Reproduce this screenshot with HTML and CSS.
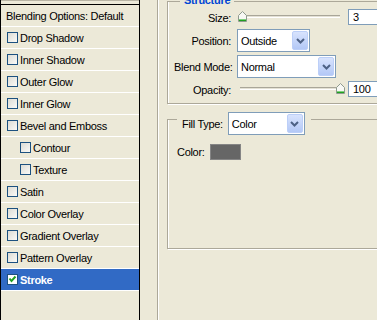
FILE: index.html
```html
<!DOCTYPE html>
<html lang="en">
<head>
    <meta charset="UTF-8">
    <meta name="viewport" content="width=device-width, initial-scale=1.0">
    <title>Layer Style - Stroke</title>
    <link rel="stylesheet" href="styles.css">
</head>
<body>
    <div class="dialog">
        <ul class="style-list">
            <li class="list-top"></li>
            <li class="item plain">Blending Options: Default</li>
            <li class="item"><span class="check"></span>Drop Shadow</li>
            <li class="item"><span class="check"></span>Inner Shadow</li>
            <li class="item"><span class="check"></span>Outer Glow</li>
            <li class="item"><span class="check"></span>Inner Glow</li>
            <li class="item"><span class="check"></span>Bevel and Emboss</li>
            <li class="item sub"><span class="check"></span>Contour</li>
            <li class="item sub"><span class="check"></span>Texture</li>
            <li class="item"><span class="check"></span>Satin</li>
            <li class="item"><span class="check"></span>Color Overlay</li>
            <li class="item"><span class="check"></span>Gradient Overlay</li>
            <li class="item"><span class="check"></span>Pattern Overlay</li>
            <li class="item selected">
                <span class="check checked">
                    <svg width="9" height="9" viewBox="0 0 9 9"><path d="M1.5 3.5 3.5 6 7.5 1.5" fill="none" stroke="#21A121" stroke-width="2"/></svg>
                </span>Stroke
            </li>
        </ul>

        <section class="stroke-group">
            <fieldset class="group structure">
                <legend>Structure</legend>
                <div class="form-grid">
                    <label>Size:</label>
                    <div class="slider-row">
                        <div class="slider">
                            <div class="track"></div>
                            <svg class="thumb" style="left: 1px" width="9" height="11" viewBox="0 0 9 11"><path d="M.5 4.5 4.5.5 8.5 4.5V10.5H.5Z" fill="#F8F8F4" stroke="#8E9A8E"/><path d="M1 8.5H8" stroke="#7FD07F"/><path d="M1 9.5H8" stroke="#21A121"/></svg>
                        </div>
                        <div class="field">3</div>
                    </div>

                    <label>Position:</label>
                    <div class="combo combo-position">
                        <span class="combo-text">Outside</span>
                        <span class="drop"><svg width="9" height="6" viewBox="0 0 9 6"><path d="M1 1 4.5 4.5 8 1" fill="none" stroke="#4D6185" stroke-width="2"/></svg></span>
                    </div>

                    <label>Blend Mode:</label>
                    <div class="combo combo-blend">
                        <span class="combo-text">Normal</span>
                        <span class="drop"><svg width="9" height="6" viewBox="0 0 9 6"><path d="M1 1 4.5 4.5 8 1" fill="none" stroke="#4D6185" stroke-width="2"/></svg></span>
                    </div>

                    <label>Opacity:</label>
                    <div class="slider-row">
                        <div class="slider">
                            <div class="track"></div>
                            <svg class="thumb" style="left: 99px" width="9" height="11" viewBox="0 0 9 11"><path d="M.5 4.5 4.5.5 8.5 4.5V10.5H.5Z" fill="#F8F8F4" stroke="#8E9A8E"/><path d="M1 8.5H8" stroke="#7FD07F"/><path d="M1 9.5H8" stroke="#21A121"/></svg>
                        </div>
                        <div class="field">100</div>
                    </div>
                </div>
            </fieldset>

            <fieldset class="group fill">
                <legend>
                    <span>Fill Type:</span>
                    <span class="combo combo-fill">
                        <span class="combo-text">Color</span>
                        <span class="drop"><svg width="9" height="6" viewBox="0 0 9 6"><path d="M1 1 4.5 4.5 8 1" fill="none" stroke="#4D6185" stroke-width="2"/></svg></span>
                    </span>
                </legend>
                <div class="color-row">
                    <span>Color:</span>
                    <span class="swatch"></span>
                </div>
            </fieldset>
        </section>
    </div>
</body>
</html>
```

FILE: styles.css
```css
/* Windows XP dialog colours */
:root {
    --face: #ECE9D8;
    --etch: #ACA899;
    --field-border: #7F9DB9;
    --highlight: #316AC5;
    --group-title: #0046D5;
}

* {
    box-sizing: border-box;
}

html, body {
    margin: 0;
    height: 320px;
    overflow: hidden;
}

body {
    background-color: var(--face);
    color: #000;
    font-family: "Liberation Sans", Arial, sans-serif;
    font-size: 11px;
    letter-spacing: -0.3px;
}

.dialog {
    display: flex;
    align-items: flex-start;
    height: 320px;
}

/* Left list of styles */
.style-list {
    flex: none;
    width: 140px;
    height: 320px;
    margin: 0;
    padding: 0;
    list-style: none;
    border-left: 1px solid #000;
    border-right: 1px solid #000;
}

.list-top {
    height: 5px;
    border-top: 1px solid #B8B4A4;
    border-bottom: 1px solid #000;
}

.item {
    display: flex;
    align-items: center;
    gap: 2px;
    height: 22px;
    padding-left: 6px;
    border-bottom: 1px solid #fff;
    white-space: nowrap;
}

.item.plain {
    padding-left: 5px;
}

.item.sub {
    padding-left: 19px;
}

.item.selected {
    background-color: var(--highlight);
    color: #fff;
    font-weight: bold;
}

.check {
    flex: none;
    display: flex;
    align-items: center;
    justify-content: center;
    width: 11px;
    height: 11px;
    border: 1px solid #1C5180;
    background: linear-gradient(135deg, #DCDBD4, #FAFAF8);
}

.check.checked {
    background: #fff;
}

/* Stroke options */
.stroke-group {
    flex: none;
    width: 260px;
    height: 320px;
    margin-left: 17px;
    padding-left: 9px;
    border-left: 1px solid var(--etch);
    box-shadow: inset 1px 0 0 #fff;
}

.group {
    min-width: 0;
    margin: 0;
    padding: 0 0 0 6px;
    border: 1px solid var(--etch);
    box-shadow: inset 1px 0 0 #fff, 1px 1px 0 #fff;
}

.structure {
    margin-top: -6px;
    padding-bottom: 5px;
}

.structure legend {
    margin-left: 6px;
    padding: 0 4px 2px;
    line-height: 13px;
    color: var(--group-title);
    font-weight: bold;
}

.form-grid {
    display: grid;
    grid-template-columns: 57px auto;
    grid-template-rows: 17px 23px 23px 17px;
    column-gap: 6px;
    row-gap: 3px;
    align-items: center;
}

.form-grid label {
    text-align: right;
    white-space: nowrap;
}

.slider-row {
    display: flex;
    align-items: flex-start;
    height: 17px;
}

.slider {
    position: relative;
    width: 111px;
    height: 17px;
}

.track {
    width: 100px;
    height: 3px;
    margin: 6px 0 0 3px;
    background-color: #E4E1D4;
    border-top: 1px solid #A9A699;
    border-bottom: 1px solid #fff;
}

.thumb {
    position: absolute;
    top: 2px;
}

.field {
    width: 40px;
    height: 16px;
    padding-left: 4px;
    line-height: 14px;
    background-color: #fff;
    border: 1px solid var(--field-border);
}

.combo {
    display: flex;
    align-items: center;
    height: 23px;
    padding: 1px;
    background-color: #fff;
    border: 1px solid var(--field-border);
}

.combo-text {
    flex: 1;
    padding-left: 2px;
}

.drop {
    display: flex;
    align-items: center;
    justify-content: center;
    width: 16px;
    height: 19px;
    background: linear-gradient(#D8E3FD, #B3C8F6);
    border: 1px solid #BCCFF8;
    border-radius: 2px;
}

.combo-position {
    width: 73px;
}

.combo-blend {
    width: 99px;
}

.combo-fill {
    width: 77px;
}

/* Fill type group */
.fill {
    padding-bottom: 88px;
}

.fill legend {
    display: flex;
    align-items: center;
    gap: 5px;
    margin-left: 3px;
    padding: 8px 6px 0 5px;
}

.color-row {
    display: flex;
    align-items: center;
    gap: 5px;
    margin: 9px 0 0 3px;
}

.swatch {
    width: 31px;
    height: 16px;
    background-color: #666;
    border: 1px solid #858585;
}
```
